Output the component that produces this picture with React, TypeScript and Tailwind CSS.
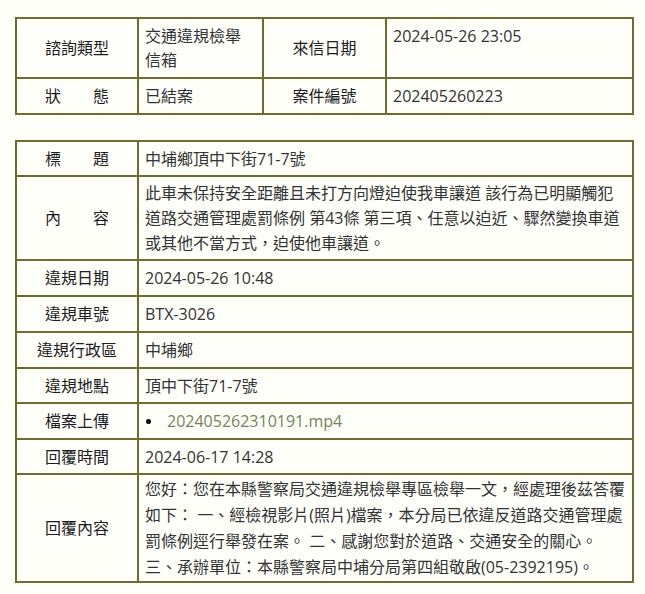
const line = "border-[#6e6d2e]";

function Label({ children }: { children: React.ReactNode }) {
  return (
    <div className={`flex items-center justify-center border-r-2 border-b-2 ${line} text-[#1c1c1c]`}>
      <span className="leading-[24px]">{children}</span>
    </div>
  );
}

function Value({ children, className = "" }: { children: React.ReactNode; className?: string }) {
  return (
    <div className={`border-r-2 border-b-2 ${line} pl-[6px] text-[#333] ${className}`}>{children}</div>
  );
}

const rows: { label: string; value: React.ReactNode; pad: string }[] = [
  { label: "違規日期", value: "2024-05-26 10:48", pad: "py-[5px]" },
  { label: "違規車號", value: "BTX-3026", pad: "py-[5px]" },
  { label: "違規行政區", value: "中埔鄉", pad: "py-[5px]" },
  { label: "違規地點", value: "頂中下街71-7號", pad: "pt-[5px] pb-[4px]" },
  {
    label: "檔案上傳",
    value: (
      <div className="flex items-center">
        <span className="ml-[1px] mr-[16px] inline-block h-[5px] w-[5px] rounded-full bg-black" />
        <a href="#" className="text-[#74845a]">
          202405262310191.mp4
        </a>
      </div>
    ),
    pad: "py-[5px]",
  },
  { label: "回覆時間", value: "2024-06-17 14:28", pad: "pt-[5px] pb-[4px]" },
];

export default function App() {
  return (
    <div className="min-h-[594px] bg-[#fffffa] pt-[17px] font-['Open_Sans','Noto_Sans_CJK_TC',sans-serif] text-[16px]">
      {/* 案件摘要 */}
      <div className={`ml-[15px] grid w-[619px] grid-cols-[122px_125px_123px_247px] border-t-2 border-l-2 ${line}`}>
        <Label>諮詢類型</Label>
        <Value className="py-[5px] pr-[8px] leading-[24px]">交通違規檢舉信箱</Value>
        <Label>來信日期</Label>
        <Value className="py-[5px] leading-[24px]">2024-05-26 23:05</Value>

        <Label>狀　　態</Label>
        <Value className="py-[5px] leading-[24px]">已結案</Value>
        <Label>案件編號</Label>
        <Value className="py-[5px] leading-[24px]">202405260223</Value>
      </div>

      {/* 檢舉內容 */}
      <div className={`mt-[25px] ml-[15px] grid w-[619px] grid-cols-[122px_495px] border-t-2 border-l-2 ${line}`}>
        <Label>標　　題</Label>
        <Value className="pt-[5px] pb-[4px] leading-[24px]">中埔鄉頂中下街71-7號</Value>

        <Label>內　　容</Label>
        <Value className="pt-[4px] pb-[3px] pr-[4px] leading-[25px]">
          此車未保持安全距離且未打方向燈迫使我車讓道 該行為已明顯觸犯
          <br />
          道路交通管理處罰條例 第43條 第三項、任意以迫近、驟然變換車道
          <br />
          或其他不當方式，迫使他車讓道。
        </Value>

        {rows.map((r) => (
          <div key={r.label} className="contents">
            <Label>{r.label}</Label>
            <Value className={`${r.pad} leading-[24px]`}>{r.value}</Value>
          </div>
        ))}

        <Label>回覆內容</Label>
        <Value className="py-[1px] pr-[4px] leading-[26px]">
          您好：您在本縣警察局交通違規檢舉專區檢舉一文，經處理後茲答覆
          <br />
          如下： 一、經檢視影片(照片)檔案，本分局已依違反道路交通管理處
          <br />
          罰條例逕行舉發在案。 二、感謝您對於道路、交通安全的關心。
          <br />
          三、承辦單位：本縣警察局中埔分局第四組敬啟(05-2392195)。
        </Value>
      </div>
    </div>
  );
}
